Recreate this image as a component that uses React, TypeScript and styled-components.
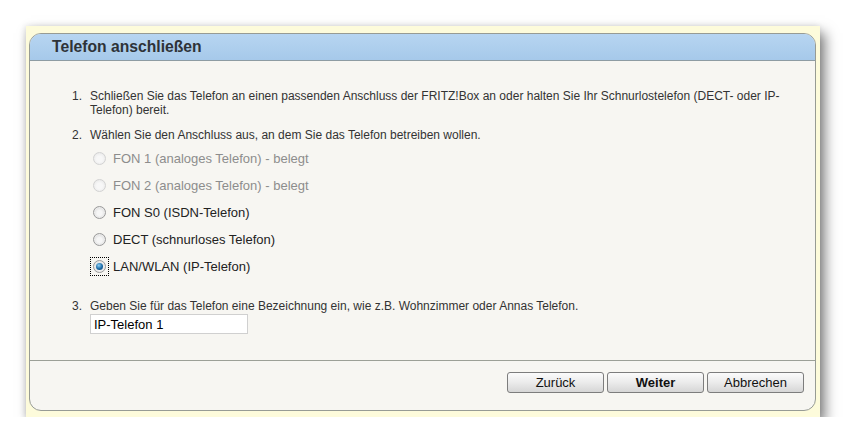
import * as React from 'react';
import styled, { createGlobalStyle, css } from 'styled-components';

const GlobalStyle = createGlobalStyle`
  html, body {
    margin: 0;
    padding: 0;
    background: #ffffff;
  }
  body {
    font-family: "Liberation Sans", Arial, sans-serif;
    color: #333333;
  }
`;

const Page = styled.div`
  padding: 26px 0 0 26px;
`;

const Frame = styled.div`
  width: 794px;
  height: 391px;
  box-sizing: border-box;
  padding: 7px 4px 6px 3px;
  background: #fdfbdb;
  box-shadow: 5px 7px 12px rgba(0, 0, 0, 0.5), -1px 0 6px rgba(0, 0, 0, 0.12);
`;

const Dialog = styled.div`
  height: 100%;
  box-sizing: border-box;
  display: flex;
  flex-direction: column;
  border: 1px solid #979b94;
  border-radius: 12px;
  background: #f7f6f2;
  overflow: hidden;
`;

const Header = styled.div`
  height: 26px;
  flex-shrink: 0;
  display: flex;
  align-items: center;
  padding-left: 22px;
  background: linear-gradient(#b7d5f1, #a6c9ea);
  border-bottom: 1px solid #8e9ca3;
`;

const Title = styled.h1`
  margin: 0;
  font-size: 15.7px;
  font-weight: bold;
  color: #2e3338;
`;

const Body = styled.div`
  flex: 1;
  padding: 28px 20px 0 42px;
  border-bottom: 1px solid #9ca097;
`;

const Step = styled.div<{ $gap: number }>`
  display: grid;
  grid-template-columns: 18px 1fr;
  font-size: 12px;
  line-height: 14px;
  margin-bottom: ${(p) => p.$gap}px;
`;

const Num = styled.span``;

const Options = styled.div`
  margin-top: 3px;
  display: flex;
  flex-direction: column;
`;

const OptionRow = styled.label<{ $disabled?: boolean }>`
  height: 27px;
  display: flex;
  align-items: center;
  gap: 4px;
  font-size: 13px;
  color: ${(p) => (p.$disabled ? '#8d8d8d' : '#222222')};
`;

const Focus = styled.span<{ $focused?: boolean }>`
  width: 19px;
  height: 19px;
  box-sizing: border-box;
  display: flex;
  align-items: center;
  justify-content: center;
  ${(p) =>
    p.$focused &&
    css`
      outline: 1px dotted #000;
      outline-offset: -1px;
    `}
`;

const Radio = styled.span<{ $checked?: boolean; $disabled?: boolean }>`
  width: 13px;
  height: 13px;
  border-radius: 50%;
  box-sizing: border-box;
  border: 1px solid ${(p) => (p.$disabled ? '#d2d2d2' : '#9a9a9a')};
  background: ${(p) =>
    p.$disabled
      ? 'radial-gradient(circle at 50% 55%, #f7f7f7 35%, #e4e4e4)'
      : 'radial-gradient(circle at 50% 55%, #f6f6f6 30%, #cfcfcf)'};
  box-shadow: ${(p) => (p.$disabled ? 'none' : 'inset 0 0 0 1px #ececec')};
  display: flex;
  align-items: center;
  justify-content: center;
  &::after {
    content: '';
    display: ${(p) => (p.$checked ? 'block' : 'none')};
    width: 7px;
    height: 7px;
    border-radius: 50%;
    background: radial-gradient(circle at 40% 35%, #8fd0f5, #1a6aa6 55%, #0b3a66);
  }
`;

const NameInput = styled.input`
  display: block;
  width: 158px;
  height: 20px;
  box-sizing: border-box;
  margin-top: 1px;
  padding: 0 3px;
  border: 1px solid #d0d0d0;
  background: #ffffff;
  font-family: "Liberation Sans", Arial, sans-serif;
  font-size: 13px;
  color: #000;
  outline: none;
`;

const Footer = styled.div`
  height: 49px;
  flex-shrink: 0;
  box-sizing: border-box;
  display: flex;
  justify-content: flex-end;
  align-items: flex-start;
  gap: 3px;
  padding: 11px 11px 0 0;
`;

const Button = styled.button<{ $primary?: boolean }>`
  width: 97px;
  height: 21px;
  padding: 0;
  border: 1px solid #7d7d7d;
  border-radius: 3px;
  background: linear-gradient(#fbfbfb, #ebebeb 50%, #d6d6d6);
  font-family: "Liberation Sans", Arial, sans-serif;
  font-size: 13px;
  font-weight: ${(p) => (p.$primary ? 'bold' : 'normal')};
  color: #111;
`;

const options = [
  { label: 'FON 1 (analoges Telefon) - belegt', disabled: true },
  { label: 'FON 2 (analoges Telefon) - belegt', disabled: true },
  { label: 'FON S0 (ISDN-Telefon)' },
  { label: 'DECT (schnurloses Telefon)' },
  { label: 'LAN/WLAN (IP-Telefon)', checked: true },
];

export default function App() {
  return (
    <Page>
      <GlobalStyle />
      <Frame>
        <Dialog>
          <Header>
            <Title>Telefon anschließen</Title>
          </Header>
          <Body>
            <Step $gap={11}>
              <Num>1.</Num>
              <span>
                Schließen Sie das Telefon an einen passenden Anschluss der FRITZ!Box an oder halten
                Sie Ihr Schnurlostelefon (DECT- oder IP-Telefon) bereit.
              </span>
            </Step>
            <Step $gap={19}>
              <Num>2.</Num>
              <div>
                <span>Wählen Sie den Anschluss aus, an dem Sie das Telefon betreiben wollen.</span>
                <Options>
                  {options.map((o) => (
                    <OptionRow key={o.label} $disabled={o.disabled}>
                      <Focus $focused={o.checked}>
                        <Radio $checked={o.checked} $disabled={o.disabled} />
                      </Focus>
                      {o.label}
                    </OptionRow>
                  ))}
                </Options>
              </div>
            </Step>
            <Step $gap={0}>
              <Num>3.</Num>
              <div>
                <span>
                  Geben Sie für das Telefon eine Bezeichnung ein, wie z.B. Wohnzimmer oder Annas
                  Telefon.
                </span>
                <NameInput defaultValue="IP-Telefon 1" />
              </div>
            </Step>
          </Body>
          <Footer>
            <Button>Zurück</Button>
            <Button $primary>Weiter</Button>
            <Button>Abbrechen</Button>
          </Footer>
        </Dialog>
      </Frame>
    </Page>
  );
}
